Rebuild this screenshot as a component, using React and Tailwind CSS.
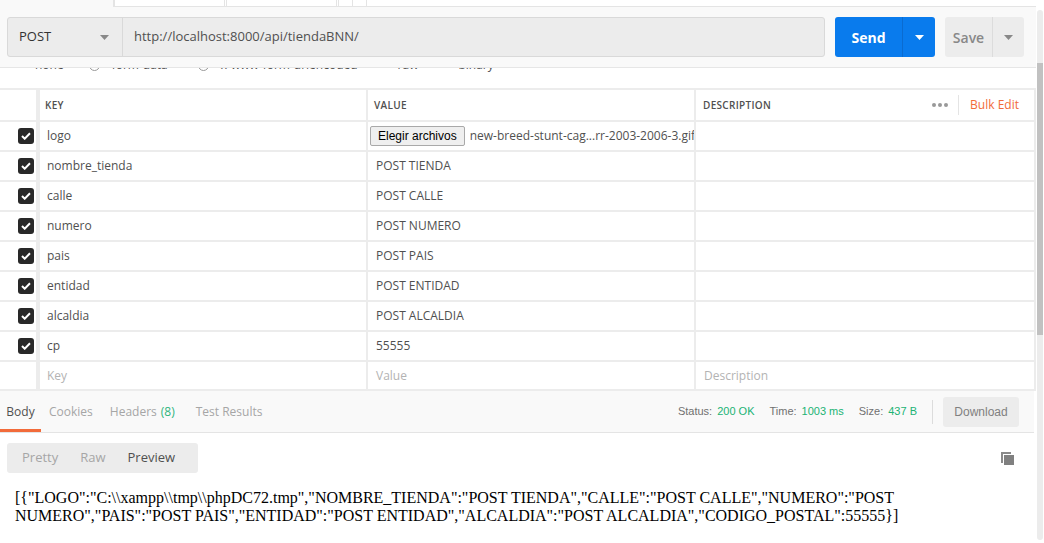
import React from "react";

const rows = [
  { key: "logo", file: true },
  { key: "nombre_tienda", value: "POST TIENDA" },
  { key: "calle", value: "POST CALLE" },
  { key: "numero", value: "POST NUMERO" },
  { key: "pais", value: "POST PAIS" },
  { key: "entidad", value: "POST ENTIDAD" },
  { key: "alcaldia", value: "POST ALCALDIA" },
  { key: "cp", value: "55555" },
];

const line1 =
  '[{"LOGO":"C:\\\\xampp\\\\tmp\\\\phpDC72.tmp","NOMBRE_TIENDA":"POST TIENDA","CALLE":"POST CALLE","NUMERO":"POST';
const line2 =
  'NUMERO","PAIS":"POST PAIS","ENTIDAD":"POST ENTIDAD","ALCALDIA":"POST ALCALDIA","CODIGO_POSTAL":55555}]';

function Caret({ color }) {
  return (
    <svg width="9" height="5" viewBox="0 0 9 5">
      <path d="M0 0h9L4.5 5z" fill={color} />
    </svg>
  );
}

function Check() {
  return (
    <div className="w-[16px] h-[16px] rounded-[3px] bg-[#282828] flex items-center justify-center">
      <svg width="10" height="8" viewBox="0 0 10 8">
        <path d="M1 4l2.7 2.7L9 1.3" stroke="#fff" strokeWidth="2" fill="none" />
      </svg>
    </div>
  );
}

export default function App() {
  return (
    <div className="w-[1044px] h-[543px] overflow-hidden flex bg-white text-[#505050] font-['Open_Sans',sans-serif]">
      <div className="w-[1036px] shrink-0 flex flex-col">
        {/* tab strip, mostly scrolled away */}
        <div className="h-[7px] flex">
          <div className="w-[113px] bg-[#f9f9f9]" />
          <div className="w-[2px] border-x border-b border-[#e4e4e4] bg-white" />
          <div className="w-[110px] border-r border-b border-[#e4e4e4] bg-white" />
          <div className="w-[2px] border-r border-b border-[#e4e4e4] bg-white" />
          <div className="w-[110px] border-r border-b border-[#e4e4e4] bg-white" />
          <div className="w-[2px] border-r border-b border-[#e4e4e4] bg-white" />
          <div className="w-[14px] border-r border-b border-[#e4e4e4] bg-white" />
          <div className="w-[14px] border-r border-b border-[#e4e4e4] bg-white" />
          <div className="flex-1 border-b border-[#e4e4e4] bg-white" />
        </div>

        {/* request bar */}
        <div className="h-[61px] bg-[#f9f9f9] border-b border-[#e6e6e6] flex items-start pt-[10px] pl-[7px]">
          <div className="w-[818px] h-[40px] flex bg-[#ececec] border border-[#d9d9d9] rounded-[3px]">
            <div className="w-[115px] flex items-center justify-between pl-[11px] pr-[13px] border-r border-[#d9d9d9] text-[13px] text-[#333]">
              <span>POST</span>
              <Caret color="#888" />
            </div>
            <div className="flex-1 flex items-center pl-[11px] text-[13px] text-[#505050]">
              http://localhost:8000/api/tiendaBNN/
            </div>
          </div>
          <div className="ml-[10px] w-[100px] h-[40px] flex bg-[#097bed] rounded-[3px] text-white">
            <div className="w-[68px] flex items-center justify-center text-[14px] font-bold border-r border-[#0a6bd0]">
              Send
            </div>
            <div className="flex-1 flex items-center justify-center">
              <Caret color="#fff" />
            </div>
          </div>
          <div className="ml-[10px] w-[79px] h-[40px] flex bg-[#ececec] rounded-[3px] text-[#888]">
            <div className="w-[48px] flex items-center justify-center text-[14px] font-semibold border-r border-[#dcdcdc]">
              Save
            </div>
            <div className="flex-1 flex items-center justify-center">
              <Caret color="#888" />
            </div>
          </div>
        </div>

        {/* body type radios, scrolled almost out */}
        <div className="h-[20px]">
          <div className="h-[5px] overflow-hidden">
            <div className="-mt-[11px] flex items-center text-[12px] leading-[16px] text-[#505050]">
              <span className="ml-[35px]">none</span>
              <span className="ml-[25px] w-[11px] h-[11px] rounded-full border border-[#999]" />
              <span className="ml-[12px]">form-data</span>
              <span className="ml-[30px] w-[11px] h-[11px] rounded-full border border-[#999]" />
              <span className="ml-[12px]">x-www-form-urlencoded</span>
              <span className="ml-[40px]">raw</span>
              <span className="ml-[40px]">binary</span>
            </div>
          </div>
        </div>

        {/* params table */}
        <div className="border-t-2 border-[#ececec]">
          <div className="h-[32px] flex border-b-2 border-[#ececec]">
            <div className="w-[40px] shrink-0 border-r-4 border-[#ececec]" />
            <div className="w-[328px] shrink-0 border-r-2 border-[#ececec] flex items-center pl-[5px] text-[10px] font-semibold tracking-[0.3px]">
              KEY
            </div>
            <div className="w-[328px] shrink-0 border-r-2 border-[#ececec] flex items-center pl-[6px] text-[10px] font-semibold tracking-[0.3px]">
              VALUE
            </div>
            <div className="flex-1 border-r-2 border-[#ececec] flex items-center pl-[7px] pr-[15px] text-[10px] font-semibold tracking-[0.3px]">
              <span className="flex-1">DESCRIPTION</span>
              <span className="h-[20px] border-r border-[#e4e4e4] pr-[10px] flex items-center gap-[2px]">
                <span className="w-[4px] h-[4px] rounded-full bg-[#999]" />
                <span className="w-[4px] h-[4px] rounded-full bg-[#999]" />
                <span className="w-[4px] h-[4px] rounded-full bg-[#999]" />
              </span>
              <span className="pl-[11px] text-[12px] font-normal tracking-normal text-[#f26b3a]">Bulk Edit</span>
            </div>
          </div>

          {rows.map((r) => (
            <div key={r.key} className="h-[30px] flex border-b-2 border-[#ececec] text-[12px]">
              <div className="w-[40px] shrink-0 border-r-4 border-[#ececec] flex items-center pl-[18px]">
                <Check />
              </div>
              <div className="w-[328px] shrink-0 border-r-2 border-[#ececec] flex items-center pl-[7px]">{r.key}</div>
              <div className="w-[328px] shrink-0 border-r-2 border-[#ececec] flex items-center pl-[2px] whitespace-nowrap overflow-hidden">
                {r.file ? (
                  <>
                    <span className="h-[20px] px-[7px] flex items-center border border-[#a9a9a9] rounded-[2px] bg-[#efefef] text-[12px] text-black font-['Liberation_Sans',Arial,sans-serif]">
                      Elegir archivos
                    </span>
                    <span className="ml-[5px] text-[12px]">new-breed-stunt-cag...rr-2003-2006-3.gif</span>
                  </>
                ) : (
                  <span className="pl-[6px]">{r.value}</span>
                )}
              </div>
              <div className="flex-1 border-r-2 border-[#ececec]" />
            </div>
          ))}

          <div className="h-[29px] flex border-b-2 border-[#ececec] text-[12px] text-[#b3b3b3]">
            <div className="w-[40px] shrink-0 border-r-4 border-[#ececec]" />
            <div className="w-[328px] shrink-0 border-r-2 border-[#ececec] flex items-center pl-[7px]">Key</div>
            <div className="w-[328px] shrink-0 border-r-2 border-[#ececec] flex items-center pl-[8px]">Value</div>
            <div className="flex-1 border-r-2 border-[#ececec] flex items-center pl-[8px]">Description</div>
          </div>
        </div>

        {/* response bar */}
        <div className="h-[42px] bg-[#f9f9f9] border-b border-[#e4e4e4] flex items-stretch text-[12px] mr-[2px]">
          <div className="w-[41px] flex items-center justify-center border-b-[3px] border-[#f26b3a] pt-[3px] text-[#505050]">
            Body
          </div>
          <div className="ml-[8px] flex items-center pt-[1px] text-[#a6a6a6]">Cookies</div>
          <div className="ml-[17px] flex items-center pt-[1px] text-[#a6a6a6]">
            Headers <span className="ml-[4px] text-[#2fb57d]">(8)</span>
          </div>
          <div className="ml-[21px] flex items-center pt-[1px] text-[#a6a6a6]">Test Results</div>
          <div className="flex-1" />
          <div className="flex items-center text-[11px] font-['Liberation_Sans',Arial,sans-serif] text-[#707070]">
            <span>Status:</span>
            <span className="ml-[5px] text-[#20b374]">200 OK</span>
            <span className="ml-[15px]">Time:</span>
            <span className="ml-[5px] text-[#20b374]">1003 ms</span>
            <span className="ml-[15px]">Size:</span>
            <span className="ml-[5px] text-[#20b374]">437 B</span>
            <span className="ml-[15px] h-[24px] border-l border-[#dcdcdc]" />
            <span className="ml-[10px] mr-[15px] w-[76px] h-[30px] rounded-[3px] bg-[#ececec] flex items-center justify-center text-[12px] text-[#808080]">
              Download
            </span>
          </div>
        </div>

        {/* response body */}
        <div className="flex-1 relative">
          <div className="mt-[10px] ml-[7px] w-[191px] h-[30px] rounded-[3px] bg-[#ececec] flex items-center text-[13px]">
            <span className="ml-[15px] text-[#a6a6a6]">Pretty</span>
            <span className="ml-[22px] text-[#a6a6a6]">Raw</span>
            <span className="ml-[22px] text-[#505050]">Preview</span>
          </div>
          <div className="absolute right-[21px] top-[18px]">
            <svg width="15" height="15" viewBox="0 0 15 15">
              <path d="M1 1h10v2H3v9H1z" fill="#8a8a8a" />
              <rect x="4" y="4" width="10" height="10" fill="#808080" />
            </svg>
          </div>
          <div className="mt-[16px] ml-[15px] text-[16px] leading-[18px] text-black font-['Liberation_Serif','Times_New_Roman',serif] whitespace-nowrap">
            <div>{line1}</div>
            <div>{line2}</div>
          </div>
        </div>
      </div>

      {/* scrollbar */}
      <div className="flex-1 pt-[10px] pb-[3px] pl-[1px] pr-[1px]">
        <div className="h-full rounded-full bg-[#ececec] flex flex-col">
          <div className="h-[53px]" />
          <div className="h-[272px] bg-[#c1c1c1]" />
        </div>
      </div>
    </div>
  );
}
